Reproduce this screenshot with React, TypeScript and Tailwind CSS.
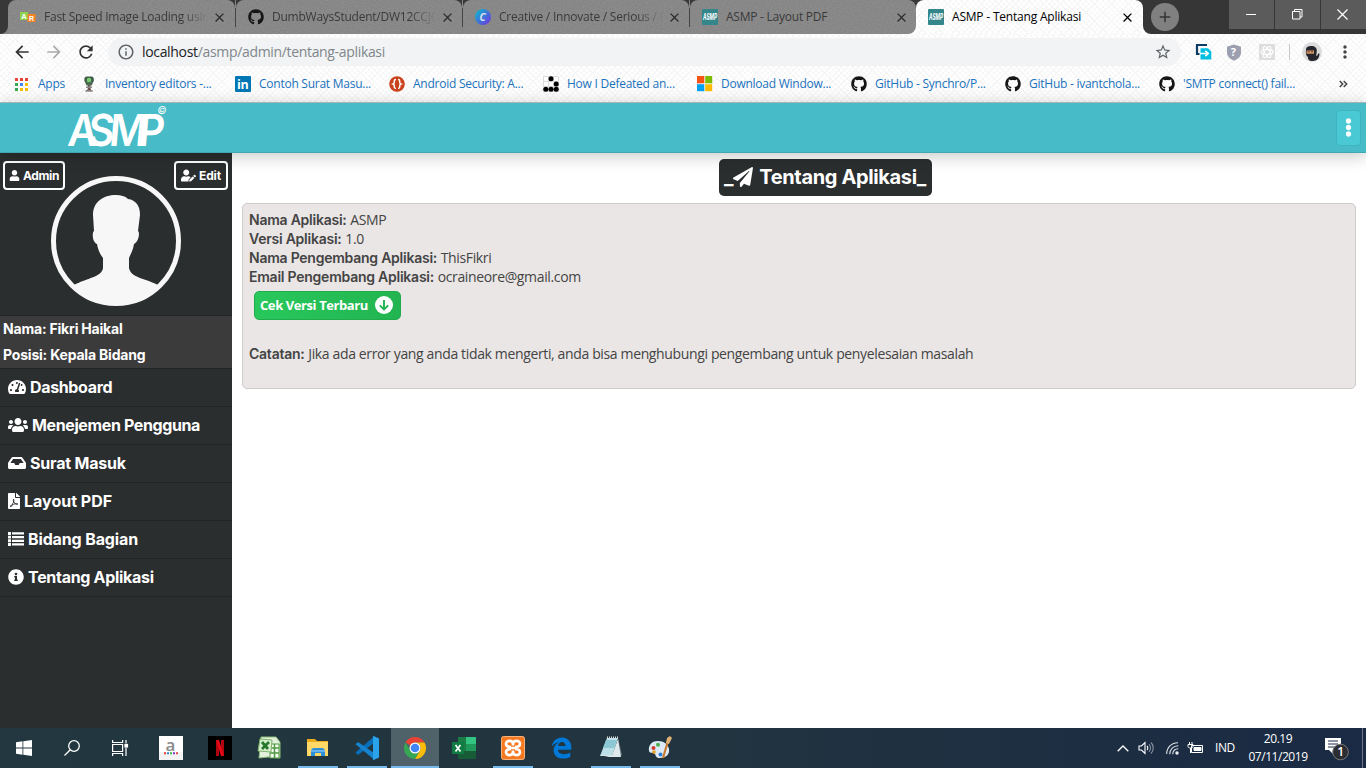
import type { ReactNode } from 'react';
import {
  FaGithub, FaUser, FaUserEdit, FaTachometerAlt, FaUsers, FaInbox, FaFilePdf, FaInfoCircle, FaPaperPlane, FaEllipsisV,
} from 'react-icons/fa';
import { MdArrowBack, MdArrowForward, MdRefresh, MdInfoOutline, MdStarBorder, MdClose, MdAdd, MdMoreVert } from 'react-icons/md';

const hatch =
  'bg-white bg-[repeating-linear-gradient(45deg,transparent_0_3px,#f6f6f6_3px_4px),repeating-linear-gradient(-45deg,transparent_0_3px,#f6f6f6_3px_4px)]';

function Grain() {
  return (
    <svg className="pointer-events-none absolute inset-0 h-full w-full opacity-20">
      <filter id="grain">
        <feTurbulence type="fractalNoise" baseFrequency="0.7" numOctaves="2" seed="4" />
        <feColorMatrix type="saturate" values="0" />
      </filter>
      <rect width="100%" height="100%" filter="url(#grain)" />
    </svg>
  );
}

function AsmpFavicon() {
  return (
    <svg width="16" height="16" viewBox="0 0 16 16">
      <rect width="16" height="16" rx="1" fill="#35868a" />
      <text x="1" y="11" fontSize="8.5" fontWeight="700" fontStyle="italic" fill="#fff" textLength="14" lengthAdjust="spacingAndGlyphs" fontFamily="Inter, sans-serif">ASMP</text>
    </svg>
  );
}

function Favicon({ kind }: { kind: string }) {
  switch (kind) {
    case 'aspsnippets':
      return (
        <svg width="16" height="16" viewBox="0 0 16 16">
          <rect x="0" y="3" width="8" height="8" fill="#8fd14f" />
          <rect x="7.5" y="5" width="8" height="8" fill="#f58220" />
          <text x="1.2" y="9.8" fontSize="7.5" fontWeight="700" fill="#fff" fontFamily="Liberation Sans, sans-serif">A</text>
          <text x="9" y="11.5" fontSize="7" fontWeight="700" fill="#fff" fontFamily="Liberation Sans, sans-serif">R</text>
        </svg>
      );
    case 'github':
      return <FaGithub size={16} color="#161616" />;
    case 'canva':
      return (
        <svg width="16" height="16" viewBox="0 0 16 16">
          <defs>
            <linearGradient id="cv" x1="0" y1="0" x2="1" y2="1">
              <stop offset="0.15" stopColor="#16a9cf" />
              <stop offset="0.9" stopColor="#6b3ce0" />
            </linearGradient>
          </defs>
          <circle cx="8" cy="8" r="8" fill="url(#cv)" />
          <text x="4.6" y="11.6" fontSize="10" fontStyle="italic" fontWeight="700" fill="#d7e4f5" fontFamily="Open Sans, sans-serif">C</text>
        </svg>
      );
    case 'tree':
      return (
        <svg width="16" height="16" viewBox="0 0 16 16">
          <path d="M6.8 9h2.6l.2 4 2 2.4H4.4l2.4-2.4z" fill="#6b5346" />
          <rect x="3.4" y="0.4" width="9.4" height="6.4" rx="2.6" fill="#3e5a4a" />
          <rect x="4.6" y="5" width="7" height="4.4" rx="1.6" fill="#4d6b52" />
          <circle cx="8" cy="4" r="2.3" fill="#7ad06e" />
          <path d="M5 11.2h6M4.6 14.6h7" stroke="#888" strokeWidth="1.4" />
        </svg>
      );
    case 'linkedin':
      return (
        <svg width="16" height="16" viewBox="0 0 16 16">
          <rect width="16" height="16" rx="1" fill="#0077b5" />
          <text x="2" y="12.6" fontSize="12.5" fontWeight="700" fill="#fff" fontFamily="Open Sans, sans-serif">in</text>
        </svg>
      );
    case 'braces':
      return (
        <svg width="16" height="16" viewBox="0 0 16 16">
          <circle cx="8" cy="8" r="7.8" fill="#c9431d" />
          <path d="M7 3.6c-1.8 0-1.7 1-1.7 2.3S5 7.600 4 8c1 .4 1.300 1 1.300 2.100S5.200 12.400 7 12.400M9 3.600c1.800 0 1.700 1 1.700 2.300S11 7.600 12 8c-1 .4-1.300 1-1.300 2.100s.1 2.300-1.700 2.300" fill="none" stroke="#fff" strokeWidth="1.5" />
        </svg>
      );
    case 'glider':
      return (
        <svg width="16" height="16" viewBox="0 0 16 16">
          <path d="M.5.5h15v15H.5zM5.5.5v15M10.5.5v15M.5 5.5h15M.5 10.5h15" fill="#fff" stroke="#ddd" />
          <g fill="#000">
            <circle cx="8" cy="2.8" r="2.5" /><circle cx="13.2" cy="8" r="2.5" />
            <circle cx="2.8" cy="13.3" r="2.5" /><circle cx="8" cy="13.3" r="2.5" /><circle cx="13.2" cy="13.3" r="2.5" />
          </g>
        </svg>
      );
    case 'windows':
      return (
        <svg width="16" height="16" viewBox="0 0 16 16">
          <path fill="#f65314" d="M0 0h7.3v7.3H0z" /><path fill="#7cbb00" d="M8.2 0h7v7.3h-7z" />
          <path fill="#00a1f1" d="M0 8.2h7.3v7H0z" /><path fill="#ffbb00" d="M8.2 8.2h7v7h-7z" />
        </svg>
      );
    default:
      return <AsmpFavicon />;
  }
}

function Tab({ icon, title, fade, width }: { icon: string; title: string; fade?: boolean; width: string }) {
  return (
    <div className={`relative h-[34px] shrink-0 overflow-hidden rounded-t-lg bg-[#838383] ${width}`}>
      <Grain />
      <div className="relative flex h-full items-center pl-3">
        <Favicon kind={icon} />
        <div className={`ml-2 w-[164px] overflow-hidden text-[12px] tracking-[-0.24px] whitespace-nowrap text-[#3a3a3a] ${fade ? '[mask-image:linear-gradient(to_right,#000_84%,transparent)]' : ''}`}>
          {title}
        </div>
        <MdClose size={15} className="ml-[4px] text-[#2c2c2c]" />
      </div>
    </div>
  );
}

function TabDivider() {
  return <div className="flex w-px bg-[#838383]"><div className="mt-2 h-[19px] w-px bg-[#444]" /></div>;
}

function TabStrip() {
  return (
    <div className="flex h-[34px] bg-[#383838]">
      <div className="w-2 bg-[#838383]"><div className="h-full rounded-br-lg bg-[#383838]" /></div>
      <Tab icon="aspsnippets" title="Fast Speed Image Loading using" fade width="w-[227px]" />
      <TabDivider />
      <Tab icon="github" title="DumbWaysStudent/DW12CCJQ" fade width="w-[226px]" />
      <TabDivider />
      <Tab icon="canva" title="Creative / Innovate / Serious / E" fade width="w-[226px]" />
      <TabDivider />
      <div className="bg-linear-to-b from-[#383838] from-50% to-white to-50%"><Tab icon="asmp" title="ASMP - Layout PDF" width="w-[226px] rounded-br-lg" /></div>
      <div className={`flex w-[227px] shrink-0 items-center rounded-t-lg pl-3 ${hatch}`}>
        <AsmpFavicon />
        <div className="ml-2 w-[166px] text-[12px] tracking-[-0.2px] text-black">ASMP - Tentang Aplikasi</div>
        <MdClose size={15} className="ml-[2px] text-black" />
      </div>
      <div className="flex flex-1 bg-white">
        <div className="flex flex-1 rounded-bl-lg bg-[#363636]">
          <div className="mt-[3px] ml-2 flex size-7 items-center justify-center rounded-full bg-[#808080] text-[#333]"><MdAdd size={18} /></div>
          <div className="ml-auto flex h-[29px] gap-px">
            <div className="flex w-[45px] items-center justify-center bg-[#5b5b5b]"><div className="h-px w-[10px] -translate-x-px bg-white" /></div>
            <div className="flex w-[45px] items-center justify-center bg-[#5b5b5b]">
              <svg width="11" height="11" viewBox="0 0 11 11" fill="none" stroke="#fff"><path d="M.5 2.500h7.500v7.500H.5zM2.500 2.500V.5H10v7.500H8" /></svg>
            </div>
            <div className="flex w-[45px] items-center justify-center bg-[#5b5b5b]">
              <svg className="-translate-x-px" width="11" height="11" viewBox="0 0 11 11" stroke="#fff" strokeWidth="1.2"><path d="M.5.5l10 10M10.500.5l-10 10" /></svg>
            </div>
          </div>
        </div>
      </div>
    </div>
  );
}

function Toolbar() {
  return (
    <div className="flex h-9 items-center">
      <div className="flex w-[108px] items-center gap-3 pl-3">
        <MdArrowBack size={20} color="#333" />
        <MdArrowForward size={20} color="#aaa" />
        <MdRefresh size={20} color="#333" />
      </div>
      <div className="flex h-7 w-[1073px] items-center rounded-full bg-[#f1f3f4] pr-[9px] pl-[9px]">
        <MdInfoOutline size={18} color="#5f6368" />
        <div className="ml-[7px] pb-[2px] text-[14px] tracking-[-0.33px] text-[#80868b]"><span className="text-[#202124]">localhost</span>/asmp/admin/tentang-aplikasi</div>
        <MdStarBorder size={18} color="#5f6368" className="ml-auto" />
      </div>
      <svg className="ml-[14px]" width="18" height="18" viewBox="0 0 18 18">
        <path d="M2 11V2h10M2 2v9h2.500" fill="none" stroke="#0b3d66" strokeWidth="2.2" />
        <path d="M5.500 5.200h7.500l3.300 3.300v8H5.500z" fill="#00bfe0" />
        <path d="M5 10.500h8M10.300 7.800l2.900 2.700-2.900 2.700" fill="none" stroke="#fff" strokeWidth="1.7" />
      </svg>
      <svg className="ml-[13px]" width="16" height="17" viewBox="0 0 16 17">
        <path d="M8 .5 15 2.800v6c0 3.500-3 6.400-7 8-4-1.600-7-4.500-7-8v-6z" fill="#9c9fb0" />
        <text x="4.8" y="12.3" fontSize="11" fontWeight="700" fill="#fff" fontFamily="Open Sans, sans-serif">?</text>
      </svg>
      <svg className="ml-[17px]" width="16" height="16" viewBox="0 0 17 17" fill="none" stroke="#fff" strokeWidth="1.2">
        <rect width="17" height="17" fill="#dedede" stroke="none" />
        <ellipse cx="8.5" cy="8.5" rx="6.5" ry="2.7" /><ellipse cx="8.5" cy="8.5" rx="6.5" ry="2.7" transform="rotate(60 8.5 8.5)" /><ellipse cx="8.5" cy="8.5" rx="6.5" ry="2.7" transform="rotate(120 8.5 8.5)" />
      </svg>
      <div className="ml-[14px] h-4 w-px bg-[#c8c8c8]" />
      <svg className="ml-[12px]" width="20" height="20" viewBox="0 0 20 20">
        <circle cx="10" cy="10" r="10" fill="#dcdcdc" />
        <path d="M4 7.500C4 5 6.500 4 9.500 4s5.500 1.500 5.300 5l-.6 5c2.300-.5 1-3 3.300-2.500 0 4-2 7.500-7 7.500-3 0-5-1.500-4.500-4C4 14 3.500 11 4 7.500z" fill="#24262c" />
        <rect x="4.5" y="8.5" width="7.5" height="3.2" fill="#d99a6c" /><path d="M5.500 9.700h2M9 9.700h2" stroke="#5b3a28" />
      </svg>
      <MdMoreVert size={20} color="#444" className="ml-[13px]" />
    </div>
  );
}

const bookmarks: [string, string][] = [
  ['tree', 'Inventory editors -...'], ['linkedin', 'Contoh Surat Masu...'], ['braces', 'Android Security: A...'], ['glider', 'How I Defeated an...'],
  ['windows', 'Download Window...'], ['github', 'GitHub - Synchro/P...'], ['github', 'GitHub - ivantchola...'], ['github', "'SMTP connect() fail..."],
];
const appDots = ['#ea4335', '#ea4335', '#ea4335', '#34a853', '#4285f4', '#fbbc05', '#34a853', '#fbbc05', '#fbbc05'];

function Bookmarks() {
  return (
    <div className="flex h-[32px] items-center pb-[4px] pl-[15px] text-[12px] tracking-[-0.25px] text-[#1a72bd]">
      <div className="flex w-[66px] items-center">
        <svg width="13" height="13" viewBox="0 0 13 13">
          {appDots.map((c, i) => <rect key={i} x={(i % 3) * 5} y={Math.floor(i / 3) * 5} width="3" height="3" fill={c} />)}
        </svg>
        <span className="ml-[10px]">Apps</span>
      </div>
      {bookmarks.map(([icon, label]) => (
        <div key={label} className="flex w-[154px] items-center gap-2 whitespace-nowrap"><Favicon kind={icon} />{label}</div>
      ))}
      <svg className="ml-[26px]" width="9" height="8" viewBox="0 0 9 8" fill="none" stroke="#444" strokeWidth="1.5"><path d="M.7 1l3 3-3 3M4.700 1l3 3-3 3" /></svg>
    </div>
  );
}

function SiteHeader() {
  return (
    <header className="relative z-10 flex h-[51px] shrink-0 items-center justify-between border-t border-b border-t-[#a8b4b5] border-b-[#3ea8b3] bg-[#47bcc8] shadow-[0_3px_16px_rgba(0,0,0,0.22)]">
      <svg className="ml-[64px]" width="106" height="49" viewBox="64 103 106 49" fill="#fff" fontFamily="Inter, sans-serif">
        <text transform="translate(64 145.5) skewX(-5) scale(.92 1)" x="3 25 48 80" y="0" fontSize="44" fontWeight="600">
          ASMP<tspan x="98" y="-32" fontSize="11" fontWeight="400">©</tspan>
        </text>
      </svg>
      <button className="mr-[5px] flex h-9 w-[25px] items-center justify-center rounded border border-[#3fb3be] bg-[#49c9d3] text-white"><FaEllipsisV size={19} /></button>
    </header>
  );
}

function ListIcon() {
  return (
    <svg width="16" height="14" viewBox="0 0 16 14" fill="#fff">
      <path d="M0 0h3v3H0zM0 3.700h3v2.900H0zM0 7.300h3v2.900H0zM0 11h3v3H0zM4 .3h12v2.300H4zM4 4h12v2.300H4zM4 7.700h12V10H4zM4 11.300h12v2.300H4z" />
    </svg>
  );
}

const menu: [ReactNode, string, string][] = [
  [<FaTachometerAlt size={18} />, 'Dashboard', 'tracking-[-0.35px]'],
  [<FaUsers size={20} />, 'Menejemen Pengguna', 'tracking-[-0.38px]'],
  [<FaInbox size={18} />, 'Surat Masuk', 'tracking-[-0.2px]'],
  [<FaFilePdf size={16} className="-mx-[2px]" />, 'Layout PDF', 'tracking-normal'],
  [<ListIcon />, 'Bidang Bagian', 'tracking-[-0.13px]'],
  [<FaInfoCircle size={16} />, 'Tentang Aplikasi', 'tracking-[-0.3px]'],
];

function Sidebar() {
  return (
    <aside className="w-[232px] shrink-0 bg-[#2b2e2f] font-[Inter,sans-serif] font-bold text-white">
      <div className="flex h-[162px] justify-between px-[3px] pt-[8px]">
        <button className="flex h-[29px] w-[62px] shrink-0 items-center justify-center gap-[3px] rounded border-2 border-white text-[12px] tracking-[-0.4px]"><FaUser size={11} />Admin</button>
        <div className="mt-[15px] -mr-[6px] -ml-[14px] shrink-0">
          <svg width="130" height="130" viewBox="0 0 130 130">
            <clipPath id="face"><circle cx="65" cy="65" r="63" /></clipPath>
            <path clipPath="url(#face)" fill="#f7f7f7" d="M65 19c5 0 9 1 12 4 8 1 12 7 12 16l-2 16c2 1 1 11-4 13-1 7-4 11-5 14v10c2 10 16 10 29 17l-8 25H31l-8-25c13-7 28-8 29-17V82c-3-4-5-8-6-14-5-2-5-12-3-13l-1-16c0-13 10-20 23-20z" />
            <circle cx="65" cy="65" r="62.5" fill="none" stroke="#f7f7f7" strokeWidth="5" />
          </svg>
        </div>
        <button className="mr-[1px] flex h-[29px] w-[54px] shrink-0 -translate-x-px items-center justify-center gap-[3px] rounded border-2 border-white text-[12px] tracking-[-0.1px]"><FaUserEdit size={15} />Edit</button>
      </div>
      <div className="h-[54px] border-y border-[#222425] bg-[#3b3b3b] pl-[3px] text-[14px] leading-[26px] tracking-[-0.2px]">
        <p>Nama: Fikri Haikal</p>
        <p>Posisi: Kepala Bidang</p>
      </div>
      {menu.map(([icon, label, tracking]) => (
        <div key={label} className={`flex h-[38px] items-center gap-1 border-b border-[#222425] pb-[2px] pl-2 text-[16px] ${tracking}`}>{icon}{label}</div>
      ))}
    </aside>
  );
}

function Content() {
  return (
    <main className="flex-1 bg-white px-[10px] pt-[6px] text-[#444]">
      <h1 className="mx-auto flex h-[37px] w-[213px] translate-x-[26px] items-center justify-center rounded-[5px] bg-[#2b2e2f] pb-px font-[Inter,sans-serif] text-[20px] font-bold tracking-[-0.36px] text-white">
        <span>_</span><FaPaperPlane size={20} /><span className="ml-[6px]">Tentang Aplikasi_</span>
      </h1>
      <section className="mt-[7px] h-[186px] rounded-[5px] border border-[#d0caca] bg-[#eae6e5] pt-[6px] pl-[6px] text-[14px] leading-[19px] tracking-[-0.36px] [&_b]:mr-[0.4px] [&_b]:font-[Inter,sans-serif] [&_b]:font-semibold [&_b]:tracking-[-0.24px]">
        <p><b>Nama Aplikasi:</b> ASMP</p>
        <p><b>Versi Aplikasi:</b> 1.0</p>
        <p><b>Nama Pengembang Aplikasi:</b> ThisFikri</p>
        <p><b>Email Pengembang Aplikasi:</b> ocraineore@gmail.com</p>
        <button className="mt-[5px] ml-[5px] flex h-[29px] w-[147px] items-center gap-[7px] rounded-[5px] border border-[#20ab4c] bg-linear-to-r from-[#28c85c] to-[#22b450] pl-[5px] text-[13px] font-bold tracking-[-0.41px] text-white">
          Cek Versi Terbaru
          <svg className="-translate-y-px" width="18" height="18" viewBox="0 0 18 18"><circle cx="9" cy="9" r="9" fill="#fff" /><path d="M9 4v9.500M4.800 9.300 9 13.500l4.200-4.200" fill="none" stroke="#22b450" strokeWidth="1.9" /></svg>
        </button>
        <p className="mt-[24px]"><b>Catatan:</b> Jika ada error yang anda tidak mengerti, anda bisa menghubungi pengembang untuk penyelesaian masalah</p>
      </section>
    </main>
  );
}

function Task({ children, open, active }: { children: ReactNode; open?: boolean; active?: boolean }) {
  return (
    <div className={`flex h-10 flex-col items-center ${active ? 'w-12 bg-[#4f626a]' : 'w-[49px]'}`}>
      <div className="flex flex-1 items-center pt-[2px]">{children}</div>
      <div className={`h-[2px] ${active ? 'w-full' : 'w-10'} ${open || active ? 'bg-[#76b9ed]' : ''}`} />
    </div>
  );
}

function Taskbar() {
  return (
    <footer className="flex h-10 shrink-0 items-center bg-linear-to-r from-[#22373f] via-[#21343f] to-[#1a2a44] text-white">
      <div className="flex w-12 justify-center">
        <svg width="16" height="16" viewBox="0 0 16 16" fill="#fff"><path d="M0 2.200 6.500 1.300v6.300H0zM7.300 1.200 16 0v7.600H7.300zM0 8.400h6.500v6.300L0 13.800zM7.300 8.400H16V16l-8.700-1.200z" /></svg>
      </div>
      <div className="flex w-12 justify-center">
        <svg width="16" height="16" viewBox="0 0 16 16" fill="none" stroke="#fff" strokeWidth="1.3"><circle cx="10" cy="6" r="5.3" /><path d="M6.300 9.800.5 15.500" /></svg>
      </div>
      <div className="flex w-[50px] justify-center">
        <svg className="-translate-x-px" width="17" height="16" viewBox="0 0 17 16" fill="none" stroke="#fff" strokeWidth="1.2"><path d="M.6 0v2.500h10V0M.6 16v-2.500h10V16M.6 4.500h10v7H.6zM14 0v3.500M14 8v8" /><rect x="13" y="4.5" width="2.500" height="2.500" fill="#fff" /></svg>
      </div>
      <Task>
        <svg width="24" height="24" viewBox="0 0 24 24"><rect width="24" height="24" fill="#fff" /><rect y="16" width="24" height="8" fill="#f3f3f3" /><text x="6.500" y="14.500" fontSize="17" fill="#8b8b8b" fontFamily="Open Sans, sans-serif" fontWeight="600">a</text>
          <path d="M5 17.300h2" stroke="#e33" strokeWidth="2" /><path d="M8 17.300h2" stroke="#38c" strokeWidth="2" /><path d="M11 17.300h2" stroke="#3b5" strokeWidth="2" /><path d="M14 17.300h2" stroke="#83c" strokeWidth="2" /><path d="M17 17.300h2" stroke="#e44" strokeWidth="2" /></svg>
      </Task>
      <Task>
        <svg width="24" height="24" viewBox="0 0 24 24"><rect width="24" height="24" fill="#000" /><path d="M8 4h3v16H8zM13 4h3v16h-3z" fill="#b1060f" /><path d="M8 4h3l5 16h-3z" fill="#e50914" /></svg>
      </Task>
      <Task>
        <svg width="24" height="24" viewBox="0 0 24 24"><path d="M4 1h15l4 5v16l-12-1-9 1z" fill="#e2f0dc" stroke="#8cbb79" /><path d="M13 8h9v14h-9z" fill="#f5fbf2" stroke="#4d9a41" /><path d="M13 12h9M13 17h9M17.500 8v14" stroke="#4d9a41" strokeWidth="1.5" /><path d="m3 3 12 1-1 12-13-1z" fill="#d9edd0" stroke="#7db36a" /><path d="m5 6 6 7M12 6l-7 7" stroke="#267a2e" strokeWidth="2.8" /></svg>
      </Task>
      <Task open>
        <svg width="24" height="24" viewBox="0 0 24 24"><path d="M1 3h8l2 2h11v15H1z" fill="#e8ac1d" /><path d="M1 6h21v14H1z" fill="#ffd868" /><path d="M5 20v-6l2-2h10l2 2v6h-4v-3H9v3z" fill="#2f8fd8" /><path d="M5 15h14" stroke="#66b5ea" strokeWidth="2" /></svg>
      </Task>
      <Task open>
        <svg width="26" height="26" viewBox="0 0 26 26"><path d="M20 1.500 1.500 17.500l2.500 2.500L20 8z" fill="#0a6fb8" /><path d="M4 7 1.500 9.200 20 24.500V18z" fill="#1683cf" /><path d="m19 .8 6 2.700v19L19 25.200z" fill="#2ba2ec" /></svg>
      </Task>
      <Task active>
        <svg width="24" height="24" viewBox="0 0 24 24"><path fill="#ea4335" d="M12 1a11 11 0 0 1 9.530 5.500H12A5.500 5.500 0 0 0 7.240 9.250L2.480 6.500A11 11 0 0 1 12 1z" /><path fill="#fbbc05" d="M21.530 6.500A11 11 0 0 1 12 23l4.760-8.250A5.500 5.500 0 0 0 12 6.500z" /><path fill="#34a853" d="M2.480 6.500A11 11 0 0 0 12 23l4.760-8.250a5.500 5.500 0 0 1-9.520 0z" /><circle cx="12" cy="12" r="5.500" fill="#fff" /><circle cx="12" cy="12" r="4.300" fill="#4285f4" /></svg>
      </Task>
      <Task>
        <svg width="24" height="22" viewBox="0 0 24 22"><path d="M6 0h9v22H6z" fill="#1b7c45" /><path d="M14 0h10v7H14z" fill="#33c481" /><path d="M14 7h10v7H14z" fill="#1f9a5a" /><path d="M6 14h18v8H6z" fill="#175c37" /><rect y="5" width="12" height="12" rx="1" fill="#107c41" /><path d="m3.500 8 5 6.500M8.500 8l-5 6.500" stroke="#fff" strokeWidth="1.7" /></svg>
      </Task>
      <Task open>
        <svg width="24" height="24" viewBox="0 0 24 24"><rect x=".5" y=".5" width="23" height="23" rx="2" fill="#f47920" stroke="#f8b27c" /><g fill="none" stroke="#fff" strokeWidth="2.7"><path d="M12 9.500V8c0-4-7-4-7-.3 0 2.300 2 3.300 5 3.300M12 9.500V8c0-4 7-4 7-.3 0 2.300-2 3.300-5 3.300M12 14.500V16c0 4-7 4-7 .3 0-2.300 2-3.300 5-3.300M12 14.500V16c0 4 7 4 7 .3 0-2.300-2-3.300-5-3.300M8 12h8" /></g></svg>
      </Task>
      <Task>
        <svg width="21" height="22" viewBox="0 0 21 22"><path fill="#0078d7" d="M.8 9.800C1.500 4 5.500.5 11 .5c6 0 9.300 4.500 9.300 9.700v2.600H7c0 3 3.200 4.500 6.300 4.500 2.200 0 4.200-.7 6-1.700v4.300c-2 1.200-4.500 1.700-7.300 1.700C6 21.600 2.600 18 2.600 13.300c0-3.500 2-6.500 5.300-8C5 5.800 2.300 7.400.8 9.800zM7.200 9h7.200c0-2.700-1.300-4-3.400-4S7.500 6.800 7.200 9z" /></svg>
      </Task>
      <Task open>
        <svg width="24" height="24" viewBox="0 0 24 24"><path d="m19 2 4 17-5 2z" fill="#687a82" /><path d="M8 2h11L13 20H1z" fill="#bce0e8" /><path d="M7 4h11l-3 8H4z" fill="#8bc7d5" /><path d="m1 19 12 .5L19 3l3 18H10z" fill="#dfe8ea" /><path d="M8 1.500h11" stroke="#ddd" strokeWidth="2" strokeDasharray="1 1" /></svg>
      </Task>
      <Task open>
        <svg width="26" height="24" viewBox="0 0 26 24"><path d="M11 5C4 5 1 10 2 15c1 3 4 1 6 3 1 2 1 4 5 4 6 0 10-4 9-9-1-5-5-8-11-8z" fill="#dceaf5" /><circle cx="6.500" cy="12" r="2" fill="#d33a2f" /><circle cx="11" cy="8.800" r="2" fill="#4caf50" /><circle cx="7" cy="16" r="1.800" fill="#e9a224" /><circle cx="13.500" cy="18.500" r="2" fill="#2f7ed8" /><path d="m21 5-5 17" stroke="#c87b32" strokeWidth="2.2" /><path d="m19 7 1-5 3-2 2 2-3 6z" fill="#e0b174" /></svg>
      </Task>
      <div className="ml-auto flex items-center">
        <svg width="12" height="7" viewBox="0 0 12 7" fill="none" stroke="#fff" strokeWidth="1.3"><path d="m.7 6.300 5.300-5.300 5.300 5.300" /></svg>
        <svg className="ml-[9px]" width="17" height="14" viewBox="0 0 17 14" fill="none" stroke="#fff" strokeWidth="1.1"><path d="M1 5h2.500L7 1.500v11L3.500 9H1z" /><path d="M9 5c1 1 1 3 0 4" /><path d="M11 3.200c2 2 2 5.600 0 7.600M13 1.500c3 3 3 8 0 11" stroke="#8792a3" /></svg>
        <svg className="ml-[11px]" width="13" height="13" viewBox="0 0 13 13" fill="none" stroke="#dfe3e8" strokeWidth="1.1"><path d="M.7 12C.7 5.500 5.500.7 12 .7M3.700 12.300C3.700 7.500 7.500 3.700 12.300 3.700M6.700 12.300c0-3.300 2.300-5.600 5.600-5.600" /><circle cx="11" cy="11" r="1.2" fill="#fff" /></svg>
        <svg className="ml-[8px]" width="17" height="12" viewBox="0 0 17 12" fill="none" stroke="#fff"><path d="M4.500 3.500h11v7h-11zM2.500 0v2.500M5 0v2.500M1 2.500h5v2c0 1-1 1.500-2.500 1.500S1 5.500 1 4.500zM3.500 6v5" /><path d="M7 5.500h7v3H7z" fill="#fff" /></svg>
        <span className="ml-[11px] w-[21px] text-[12px] tracking-[-0.4px]">IND</span>
        <div className="ml-[12px] w-[60px] text-center text-[12px] leading-[18px] tracking-[-0.45px]"><div>20.19</div><div>07/11/2019</div></div>
        <svg className="ml-[16px]" width="25" height="25" viewBox="0 0 25 25"><path d="M1 2h16v12H9v4l-4-4H1z" fill="#fff" /><path d="M4 5h10M4 8h10M4 11h7" stroke="#1a2a44" /><circle cx="16.500" cy="16" r="7.800" fill="#2b2d33" stroke="#777" /><text x="13.2" y="20.3" fontSize="12" fill="#fff" fontFamily="Open Sans, sans-serif" fontWeight="600">1</text></svg>
        <div className="ml-[13px] h-10 w-px bg-[#6d7789]" />
        <div className="w-[3px]" />
      </div>
    </footer>
  );
}

export default function App() {
  return (
    <div className="flex h-[768px] w-[1366px] flex-col overflow-hidden bg-white font-['Open_Sans','Noto_Sans',sans-serif]">
      <TabStrip />
      <div className={`h-[68px] shrink-0 ${hatch}`}>
        <Toolbar />
        <Bookmarks />
      </div>
      <SiteHeader />
      <div className="flex min-h-0 flex-1">
        <Sidebar />
        <Content />
      </div>
      <Taskbar />
    </div>
  );
}
